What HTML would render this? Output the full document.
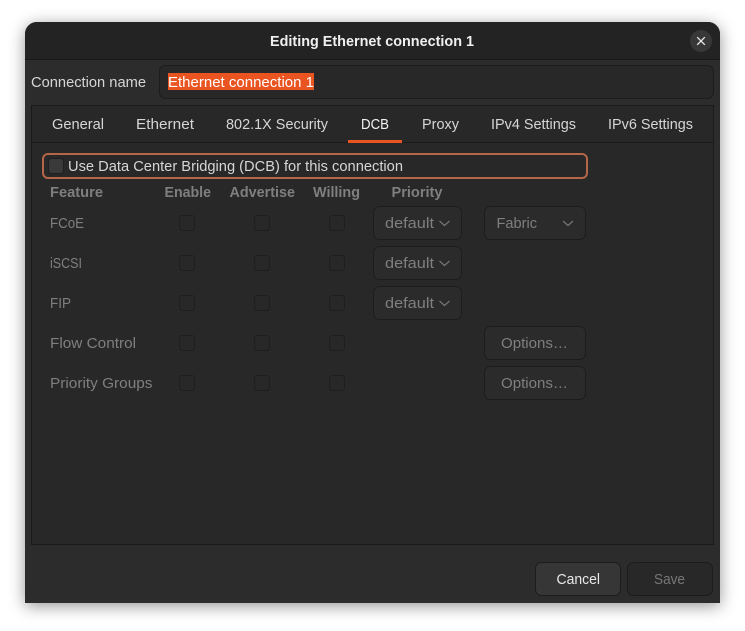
<!DOCTYPE html>
<html>
<head>
<meta charset="utf-8">
<style>
html,body{margin:0;padding:0;width:745px;height:631px;overflow:hidden;background:#fff}
#win{position:absolute;left:25px;top:22px;width:695px;height:581px;background:#2c2c2c;border-radius:12px 12px 0 0;box-shadow:0 3px 16px rgba(0,0,0,.42)}
svg{position:absolute;left:0;top:0}
text{font-family:"Liberation Sans",sans-serif;font-size:14.5px}
.b{font-weight:700}
.n{fill:#d6d6d6}
.d{fill:#7f7f7f}
.w{fill:#f2f2f2}
.cb{fill:#282828;stroke:#1e1e1e}
.btn{fill:#2b2b2b;stroke:#1d1d1d}
.ch{fill:none;stroke:#808080;stroke-width:1.1}
</style>
</head>
<body>
<div id="win"></div>
<svg width="745" height="631" viewBox="0 0 745 631" xmlns="http://www.w3.org/2000/svg">
<!-- header -->
<path d="M25 59.500V34a12 12 0 0 1 12-12H708a12 12 0 0 1 12 12V59.500Z" fill="#232323"/>
<rect x="25" y="59" width="695" height="1" fill="#191919"/>
<text class="b" x="270" y="46" textLength="204" lengthAdjust="spacingAndGlyphs" fill="#f0f0f0">Editing Ethernet connection 1</text>
<circle cx="701" cy="41" r="11" fill="#383838"/>
<path d="M697.200 37.200L704.800 44.800M704.800 37.200L697.200 44.800" stroke="#ececec" stroke-width="1.3" fill="none"/>

<!-- connection name -->
<text class="n" x="31" y="87" textLength="115" lengthAdjust="spacingAndGlyphs">Connection name</text>
<rect x="159.500" y="65.500" width="554" height="33" rx="6" fill="#282828" stroke="#1c1c1c"/>
<rect x="168" y="73" width="146" height="17" fill="#e95420"/>
<text x="168" y="87" textLength="146" lengthAdjust="spacingAndGlyphs" fill="#fff">Ethernet connection 1</text>

<!-- notebook -->
<rect x="31.500" y="105.500" width="682" height="439" fill="#282828" stroke="#1a1a1a"/>
<rect x="32" y="142" width="681" height="1" fill="#1a1a1a"/>
<rect x="348" y="140" width="54" height="3" fill="#e95420"/>
<text class="n" x="52" y="129" textLength="52" lengthAdjust="spacingAndGlyphs">General</text>
<text class="n" x="136" y="129" textLength="58" lengthAdjust="spacingAndGlyphs">Ethernet</text>
<text class="n" x="226" y="129" textLength="102" lengthAdjust="spacingAndGlyphs">802.1X Security</text>
<text class="w" x="361" y="129" textLength="28" lengthAdjust="spacingAndGlyphs">DCB</text>
<text class="n" x="422" y="129" textLength="37" lengthAdjust="spacingAndGlyphs">Proxy</text>
<text class="n" x="491" y="129" textLength="85" lengthAdjust="spacingAndGlyphs">IPv4 Settings</text>
<text class="n" x="608" y="129" textLength="85" lengthAdjust="spacingAndGlyphs">IPv6 Settings</text>

<!-- DCB check -->
<rect x="43" y="154" width="544" height="24" rx="5" fill="none" stroke="#b5654a" stroke-width="2"/>
<rect x="48.500" y="158.500" width="15" height="15" rx="3" fill="#3a3a3a" stroke="#1f1f1f"/>
<text class="n" x="68" y="171" textLength="335" lengthAdjust="spacingAndGlyphs">Use Data Center Bridging (DCB) for this connection</text>

<!-- table head -->
<text class="d b" x="50" y="197" textLength="53" lengthAdjust="spacingAndGlyphs">Feature</text>
<text class="d b" x="164.500" y="197" textLength="46.500" lengthAdjust="spacingAndGlyphs">Enable</text>
<text class="d b" x="229.500" y="197" textLength="65.500" lengthAdjust="spacingAndGlyphs">Advertise</text>
<text class="d b" x="313" y="197" textLength="47" lengthAdjust="spacingAndGlyphs">Willing</text>
<text class="d b" x="391.500" y="197" textLength="51" lengthAdjust="spacingAndGlyphs">Priority</text>

<!-- row labels -->
<text class="d" x="50" y="228" textLength="34" lengthAdjust="spacingAndGlyphs">FCoE</text>
<text class="d" x="50" y="268" textLength="32" lengthAdjust="spacingAndGlyphs">iSCSI</text>
<text class="d" x="50" y="308" textLength="21" lengthAdjust="spacingAndGlyphs">FIP</text>
<text class="d" x="50" y="348" textLength="86" lengthAdjust="spacingAndGlyphs">Flow Control</text>
<text class="d" x="50" y="388" textLength="102.500" lengthAdjust="spacingAndGlyphs">Priority Groups</text>

<!-- checkboxes -->
<g class="cb">
<rect x="179.500" y="215.500" width="15" height="15" rx="3"/><rect x="254.500" y="215.500" width="15" height="15" rx="3"/><rect x="329.500" y="215.500" width="15" height="15" rx="3"/>
<rect x="179.500" y="255.500" width="15" height="15" rx="3"/><rect x="254.500" y="255.500" width="15" height="15" rx="3"/><rect x="329.500" y="255.500" width="15" height="15" rx="3"/>
<rect x="179.500" y="295.500" width="15" height="15" rx="3"/><rect x="254.500" y="295.500" width="15" height="15" rx="3"/><rect x="329.500" y="295.500" width="15" height="15" rx="3"/>
<rect x="179.500" y="335.500" width="15" height="15" rx="3"/><rect x="254.500" y="335.500" width="15" height="15" rx="3"/><rect x="329.500" y="335.500" width="15" height="15" rx="3"/>
<rect x="179.500" y="375.500" width="15" height="15" rx="3"/><rect x="254.500" y="375.500" width="15" height="15" rx="3"/><rect x="329.500" y="375.500" width="15" height="15" rx="3"/>
</g>

<!-- combos -->
<g class="btn">
<rect x="373.500" y="206.500" width="88" height="33" rx="6"/>
<rect x="373.500" y="246.500" width="88" height="33" rx="6"/>
<rect x="373.500" y="286.500" width="88" height="33" rx="6"/>
<rect x="484.500" y="206.500" width="101" height="33" rx="6"/>
<rect x="484.500" y="326.500" width="101" height="33" rx="6"/>
<rect x="484.500" y="366.500" width="101" height="33" rx="6"/>
</g>
<text class="d" x="385" y="228" textLength="49" lengthAdjust="spacingAndGlyphs">default</text>
<text class="d" x="385" y="268" textLength="49" lengthAdjust="spacingAndGlyphs">default</text>
<text class="d" x="385" y="308" textLength="49" lengthAdjust="spacingAndGlyphs">default</text>
<text class="d" x="496.500" y="228" textLength="40.500" lengthAdjust="spacingAndGlyphs">Fabric</text>
<path class="ch" d="M439.500 221L444.500 225.500L449.500 221"/>
<path class="ch" d="M439.500 261L444.500 265.500L449.500 261"/>
<path class="ch" d="M439.500 301L444.500 305.500L449.500 301"/>
<path class="ch" d="M563 221L568 225.500L573 221"/>
<text class="d" x="501" y="348" textLength="67" lengthAdjust="spacingAndGlyphs">Options…</text>
<text class="d" x="501" y="388" textLength="67" lengthAdjust="spacingAndGlyphs">Options…</text>

<!-- footer -->
<rect x="535.500" y="562.500" width="85" height="33" rx="6" fill="#363636" stroke="#1c1c1c"/>
<rect x="627.500" y="562.500" width="85" height="33" rx="6" fill="#282828" stroke="#1c1c1c"/>
<text x="556.500" y="584" textLength="43.500" lengthAdjust="spacingAndGlyphs" fill="#e8e8e8">Cancel</text>
<text x="654" y="584" textLength="31" lengthAdjust="spacingAndGlyphs" fill="#777">Save</text>
</svg>
</body>
</html>
